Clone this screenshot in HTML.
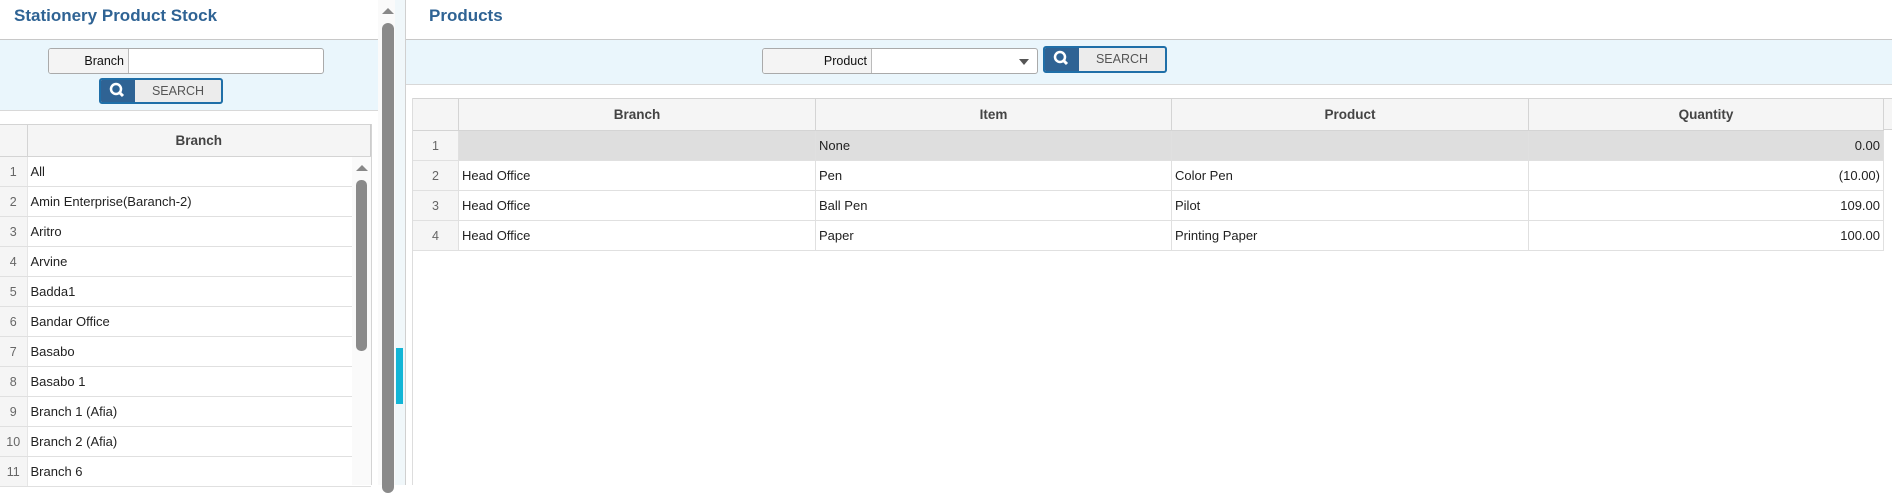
<!DOCTYPE html><html><head><style>
*{box-sizing:border-box;margin:0;padding:0}
body{width:1892px;height:485px;overflow:hidden;background:#fff;font-family:"Liberation Sans",sans-serif;font-size:13px;color:#222;position:relative}
.a{position:absolute}
.title{font-size:17px;font-weight:bold;color:#2f6394}
.band{background:#eaf6fc;border-top:1px solid #c8c8c8;border-bottom:1px solid #d8d8d8}
.fld{background:#fff;border:1px solid #aaa;border-radius:3px;display:flex;overflow:hidden}
.fld .l{background:#f4f4f4;border-right:1px solid #bbb;text-align:right;padding-right:4px;line-height:24px;font-size:12.5px;color:#111}
.btn{border:2px solid #1f6fa8;border-radius:3px;display:flex;overflow:hidden;background:#ececec}
.btn .i{background:#2f6394;width:34px;position:relative}
.btn .t{flex:1;text-align:center;color:#555;font-size:12.5px;line-height:23px}
table{border-collapse:collapse;table-layout:fixed}
td,th{border:1px solid #e0e0e0;height:30px;padding:0 3px;white-space:nowrap;overflow:hidden}
th{background:#f5f5f5;color:#444;font-weight:bold;border-color:#d4d4d4;font-size:13.5px}
td.n{background:#f5f5f5;color:#666;text-align:center;font-size:12.5px}
.lt td{border-left:0;border-right:0}
.lt td.n{border-right:1px solid #e6e6e6}
</style></head><body>
<div class="a title" style="left:14px;top:6px">Stationery Product Stock</div>
<div class="a band" style="left:0;top:39px;width:378px;height:72px"></div>
<div class="a fld" style="left:48px;top:48px;width:276px;height:26px"><div class="l" style="width:80px">Branch</div></div>
<div class="a btn" style="left:99px;top:78px;width:124px;height:26px"><div class="i"><svg width="34" height="22" viewBox="0 0 34 22"><circle cx="15" cy="9" r="5" stroke="#fff" stroke-width="2.5" fill="none"/><line x1="18.5" y1="12.5" x2="22" y2="16" stroke="#fff" stroke-width="3"/></svg></div><div class="t">SEARCH</div></div>
<table class="a lt" style="left:0;top:124px;width:371px">
<tr style="height:32px"><th style="width:27px;border-left:0"></th><th style="border-right:1px solid #ccc">Branch</th></tr>
<tr><td class="n">1</td><td>All</td></tr>
<tr><td class="n">2</td><td>Amin Enterprise(Baranch-2)</td></tr>
<tr><td class="n">3</td><td>Aritro</td></tr>
<tr><td class="n">4</td><td>Arvine</td></tr>
<tr><td class="n">5</td><td>Badda1</td></tr>
<tr><td class="n">6</td><td>Bandar Office</td></tr>
<tr><td class="n">7</td><td>Basabo</td></tr>
<tr><td class="n">8</td><td>Basabo 1</td></tr>
<tr><td class="n">9</td><td>Branch 1 (Afia)</td></tr>
<tr><td class="n">10</td><td>Branch 2 (Afia)</td></tr>
<tr><td class="n">11</td><td>Branch 6</td></tr>
</table>
<div class="a" style="left:352px;top:157px;width:19px;height:328px;background:#fafafa"></div>
<div class="a" style="left:371px;top:124px;width:1px;height:361px;background:#d4d4d4"></div>
<div class="a" style="left:356px;top:165px;width:0;height:0;border-left:6px solid transparent;border-right:6px solid transparent;border-bottom:6px solid #888"></div>
<div class="a" style="left:356px;top:180px;width:11px;height:171px;background:#8a8a8a;border-radius:5px"></div>
<div class="a" style="left:378px;top:0;width:17px;height:485px;background:#fafafa"></div>
<div class="a" style="left:382px;top:8px;width:0;height:0;border-left:6px solid transparent;border-right:6px solid transparent;border-bottom:6px solid #888"></div>
<div class="a" style="left:382px;top:23px;width:12px;height:470px;background:#8a8a8a;border-radius:6px"></div>
<div class="a" style="left:395px;top:0;width:10px;height:485px;background:#f0f7fa"></div>
<div class="a" style="left:396px;top:348px;width:7px;height:56px;background:#12b5d6"></div>
<div class="a" style="left:405px;top:0;width:1px;height:485px;background:#d0d0d0"></div>
<div class="a title" style="left:429px;top:6px">Products</div>
<div class="a band" style="left:406px;top:39px;width:1486px;height:46px"></div>
<div class="a fld" style="left:762px;top:48px;width:276px;height:26px"><div class="l" style="width:109px">Product</div><div style="flex:1;position:relative"><div class="a" style="right:8px;top:10px;border-left:5px solid transparent;border-right:5px solid transparent;border-top:6px solid #555"></div></div></div>
<div class="a btn" style="left:1043px;top:46px;width:124px;height:27px"><div class="i"><svg width="34" height="22" viewBox="0 0 34 22"><circle cx="15" cy="9" r="5" stroke="#fff" stroke-width="2.5" fill="none"/><line x1="18.5" y1="12.5" x2="22" y2="16" stroke="#fff" stroke-width="3"/></svg></div><div class="t">SEARCH</div></div>
<table class="a" style="left:412px;top:98px;width:1472px">
<tr style="height:32px"><th style="width:46px"></th><th style="width:357px">Branch</th><th style="width:356px">Item</th><th style="width:357px">Product</th><th>Quantity</th></tr>
<tr style="background:#dedede"><td class="n">1</td><td></td><td>None</td><td></td><td style="text-align:right">0.00</td></tr>
<tr><td class="n">2</td><td>Head Office</td><td>Pen</td><td>Color Pen</td><td style="text-align:right">(10.00)</td></tr>
<tr><td class="n">3</td><td>Head Office</td><td>Ball Pen</td><td>Pilot</td><td style="text-align:right">109.00</td></tr>
<tr><td class="n">4</td><td>Head Office</td><td>Paper</td><td>Printing Paper</td><td style="text-align:right">100.00</td></tr>
</table>
<div class="a" style="left:412px;top:98px;width:1px;height:387px;background:#ddd"></div>
<div class="a" style="left:1884px;top:98px;width:8px;height:32px;background:#f5f5f5;border-top:1px solid #d4d4d4;border-bottom:1px solid #d4d4d4"></div>
</body></html>
